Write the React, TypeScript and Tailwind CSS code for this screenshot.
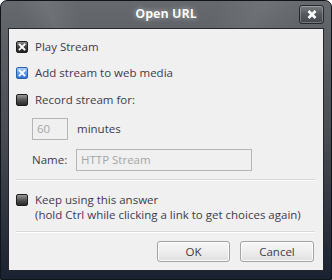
import React from "react";

function Check({ variant }: { variant: "dark" | "blue" | "off" }) {
  const cls =
    variant === "blue"
      ? "border-[#2c5fae] bg-gradient-to-b from-[#a9cdf7] via-[#5b9be8] to-[#2f73d4]"
      : variant === "dark"
      ? "border-[#1e1e1e] bg-gradient-to-b from-[#8a8a8a] via-[#3e3e3e] to-[#242424]"
      : "border-[#1e1e1e] bg-gradient-to-b from-[#9a9a9a] via-[#555555] to-[#2a2a2a]";
  return (
    <div className={`w-[12px] h-[12px] shrink-0 rounded-[2px] border flex items-center justify-center ${cls}`}>
      {variant !== "off" && (
        <svg width="8" height="8" viewBox="0 0 8 8">
          <path d="M1.5 1.5 L6.5 6.5 M6.5 1.5 L1.5 6.5" stroke="white" strokeWidth="1.8" strokeLinecap="square" />
        </svg>
      )}
    </div>
  );
}

export default function App() {
  return (
    <div
      className="w-[332px] h-[280px] flex flex-col overflow-hidden rounded-t-[7px] border border-[#10141b] bg-gradient-to-b from-[#66696e] via-[#474a50] to-[#1a2130] text-[11.5px] text-[#3f3a4c]"
      style={{ fontFamily: '"Open Sans", "Segoe UI", sans-serif' }}
    >
      <div className="h-[27px] shrink-0 relative flex items-center justify-center">
        <div className="absolute left-[20px] top-0 w-[60px] h-[27px] bg-gradient-to-r from-transparent via-[#ffffff12] to-transparent skew-x-[20deg]" />
        <div className="absolute left-[210px] top-0 w-[90px] h-[27px] bg-gradient-to-r from-transparent via-[#ffffff10] to-transparent -skew-x-[30deg]" />
        <span className="relative text-white font-bold text-[12.5px] [text-shadow:0_0_5px_rgba(255,255,255,0.6),0_0_1px_rgba(0,0,0,0.8)] -mt-[1px]">
          Open URL
        </span>
        <div className="absolute left-[298px] top-[4px] w-[25px] h-[19px] rounded-[3px] border border-[#25282d] bg-gradient-to-b from-[#7a7d82] via-[#55585d] to-[#45484d] shadow-[inset_0_0_0_1px_rgba(255,255,255,0.25)] flex items-center justify-center">
          <svg width="12" height="11" viewBox="0 0 12 11">
            <path d="M2.5 2 L9.5 9 M9.5 2 L2.5 9" stroke="white" strokeWidth="2.6" />
          </svg>
        </div>
      </div>
      <div className="mx-[7px] h-[243px] border border-[#23272e] bg-[#f0f0f0] flex flex-col pl-[7px] pr-[8px]">
        <div className="mt-[11px] h-[14px] flex items-center gap-[7px]">
          <Check variant="dark" />
          <span>Play Stream</span>
        </div>
        <div className="mt-[12px] h-[14px] flex items-center gap-[7px]">
          <Check variant="blue" />
          <span>Add stream to web media</span>
        </div>
        <div className="mt-[13px] h-[14px] flex items-center gap-[7px]">
          <Check variant="off" />
          <span>Record stream for:</span>
        </div>
        <div className="mt-[11px] h-[22px] flex items-center pl-[16px]">
          <div className="w-[36px] h-[22px] border border-[#b5b5b5] flex items-center pl-[4px] text-[#a5a5a5]">60</div>
          <span className="ml-[9px]">minutes</span>
        </div>
        <div className="mt-[9px] h-[22px] flex items-center pl-[16px]">
          <span className="w-[44px]">Name:</span>
          <div className="w-[176px] h-[22px] border border-[#b5b5b5] flex items-center pl-[4px] text-[#a5a5a5]">HTTP Stream</div>
        </div>
        <div className="mt-[8px] h-[2px] border-t border-[#d9d9d9] border-b border-b-white" />
        <div className="mt-[11px] flex gap-[7px]">
          <div className="h-[15px] flex items-center">
            <Check variant="off" />
          </div>
          <div className="leading-[15px]">
            <div>Keep using this answer</div>
            <div>(hold Ctrl while clicking a link to get choices again)</div>
          </div>
        </div>
        <div className="mt-[9px] h-[2px] border-t border-[#d9d9d9] border-b border-b-white" />
        <div className="mt-[8px] flex justify-end gap-[10px] pr-[1px]">
          <button className="w-[73px] h-[21px] rounded-[3px] border border-[#a3a3a3] bg-gradient-to-b from-[#f7f7f7] via-[#eeeeee] to-[#e0e0e0] shadow-[inset_0_0_0_1px_rgba(255,255,255,0.8)] text-[#3f3a4c]">
            OK
          </button>
          <button className="w-[74px] h-[21px] rounded-[3px] border border-[#a3a3a3] bg-gradient-to-b from-[#f7f7f7] via-[#eeeeee] to-[#e0e0e0] shadow-[inset_0_0_0_1px_rgba(255,255,255,0.8)] text-[#3f3a4c]">
            Cancel
          </button>
        </div>
      </div>
    </div>
  );
}
